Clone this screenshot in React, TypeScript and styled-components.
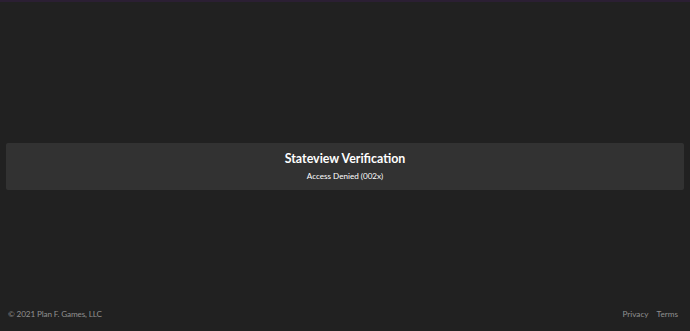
import styled, { createGlobalStyle } from "styled-components";

const GlobalStyle = createGlobalStyle`
  html, body, #root {
    margin: 0;
    padding: 0;
    height: 100%;
  }
  body {
    background: #212121;
    font-family: Lato, "Open Sans", sans-serif;
    color: #fff;
  }
`;

const Page = styled.div`
  display: flex;
  flex-direction: column;
  height: 100%;
  border-top: 2px solid #2b1f33;
  box-sizing: border-box;
`;

const Main = styled.main`
  flex: 1;
  display: flex;
  align-items: center;
  padding: 34px 6px 0;
`;

const Card = styled.section`
  flex: 1;
  display: flex;
  flex-direction: column;
  align-items: center;
  justify-content: center;
  gap: 5px;
  height: 47px;
  background: #323232;
  border-radius: 2px;
`;

const Title = styled.h1`
  margin: 0;
  font-size: 12.4px;
  font-weight: 700;
  line-height: 14px;
`;

const Message = styled.p`
  margin: 0;
  font-size: 8.1px;
  line-height: 10px;
`;

const Footer = styled.footer`
  display: flex;
  align-items: center;
  justify-content: space-between;
  height: 34px;
  padding: 0 12px 0 8px;
  font-size: 8.2px;
  color: #909090;
`;

const Copyright = styled.span`
  letter-spacing: -0.15px;
`;

const Links = styled.nav`
  display: flex;
  gap: 8px;
`;

const FooterLink = styled.a`
  color: inherit;
  text-decoration: none;
`;

export default function App() {
  return (
    <>
      <GlobalStyle />
      <Page>
        <Main>
          <Card>
            <Title>Stateview Verification</Title>
            <Message>Access Denied (002x)</Message>
          </Card>
        </Main>
        <Footer>
          <Copyright>© 2021 Plan F. Games, LLC</Copyright>
          <Links>
            <FooterLink href="#">Privacy</FooterLink>
            <FooterLink href="#">Terms</FooterLink>
          </Links>
        </Footer>
      </Page>
    </>
  );
}
